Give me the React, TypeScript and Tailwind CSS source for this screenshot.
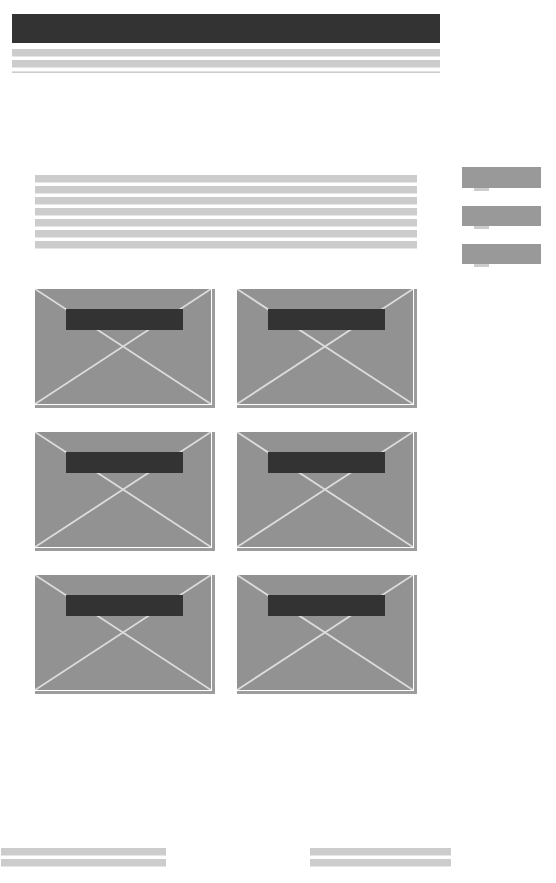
const Line = () => <div className="h-[8px] bg-[#cccccc] border-b border-[#e6e6e6]" />;

const Card = () => (
  <div className="w-[180px] bg-white pr-px pb-px border-r-[3px] border-b-[3px] border-[#9c9c9c]">
    <div className="relative w-[176px] h-[115px] bg-[#929292] pt-[20px] pl-[31px]">
      <svg className="absolute inset-0 w-full h-full" viewBox="0 0 176 115" preserveAspectRatio="none">
        <line x1="0" y1="0" x2="176" y2="115" stroke="#dcdcdc" strokeWidth="1.8" />
        <line x1="176" y1="0" x2="0" y2="115" stroke="#dcdcdc" strokeWidth="1.8" />
      </svg>
      <div className="relative w-[117px] h-[21px] bg-[#333333]" />
    </div>
  </div>
);

const NavItem = ({ tall }: { tall?: boolean }) => (
  <div className="flex flex-col">
    <div className={tall ? 'h-[21px] bg-[#999999]' : 'h-[20px] bg-[#999999]'} />
    <div className="ml-[12px] w-[15px] h-[3px] bg-[#cccccc]" />
  </div>
);

export default function App() {
  return (
    <div className="w-[556px] h-[883px] bg-white overflow-hidden">
      <div className="ml-[12px] mt-[14px] w-[428px] h-[59px] overflow-hidden flex flex-col">
        <div className="h-[29px] bg-[#333333]" />
        <div className="mt-[6px] flex flex-col gap-[3px]">
          <Line />
          <Line />
          <div className="h-[2px] bg-[#cccccc] border-t border-[#e0e0e0]" />
        </div>
      </div>

      <div className="mt-[94px] flex">
        <div className="ml-[35px] w-[382px] pt-[8px]">
          <div className="flex flex-col gap-[3px]">
            <Line />
            <Line />
            <Line />
            <Line />
            <Line />
            <Line />
            <Line />
          </div>
          <div className="mt-[40px] grid grid-cols-2 gap-x-[22px] gap-y-[24px]">
            <Card />
            <Card />
            <Card />
            <Card />
            <Card />
            <Card />
          </div>
        </div>
        <div className="ml-[45px] w-[79px] flex flex-col gap-[15px]">
          <NavItem tall />
          <NavItem />
          <NavItem />
        </div>
      </div>

      <div className="mt-[154px] flex">
        <div className="ml-[1px] w-[165px] flex flex-col gap-[3px]">
          <Line />
          <Line />
        </div>
        <div className="ml-[144px] w-[141px] flex flex-col gap-[3px]">
          <Line />
          <Line />
        </div>
      </div>
    </div>
  );
}
